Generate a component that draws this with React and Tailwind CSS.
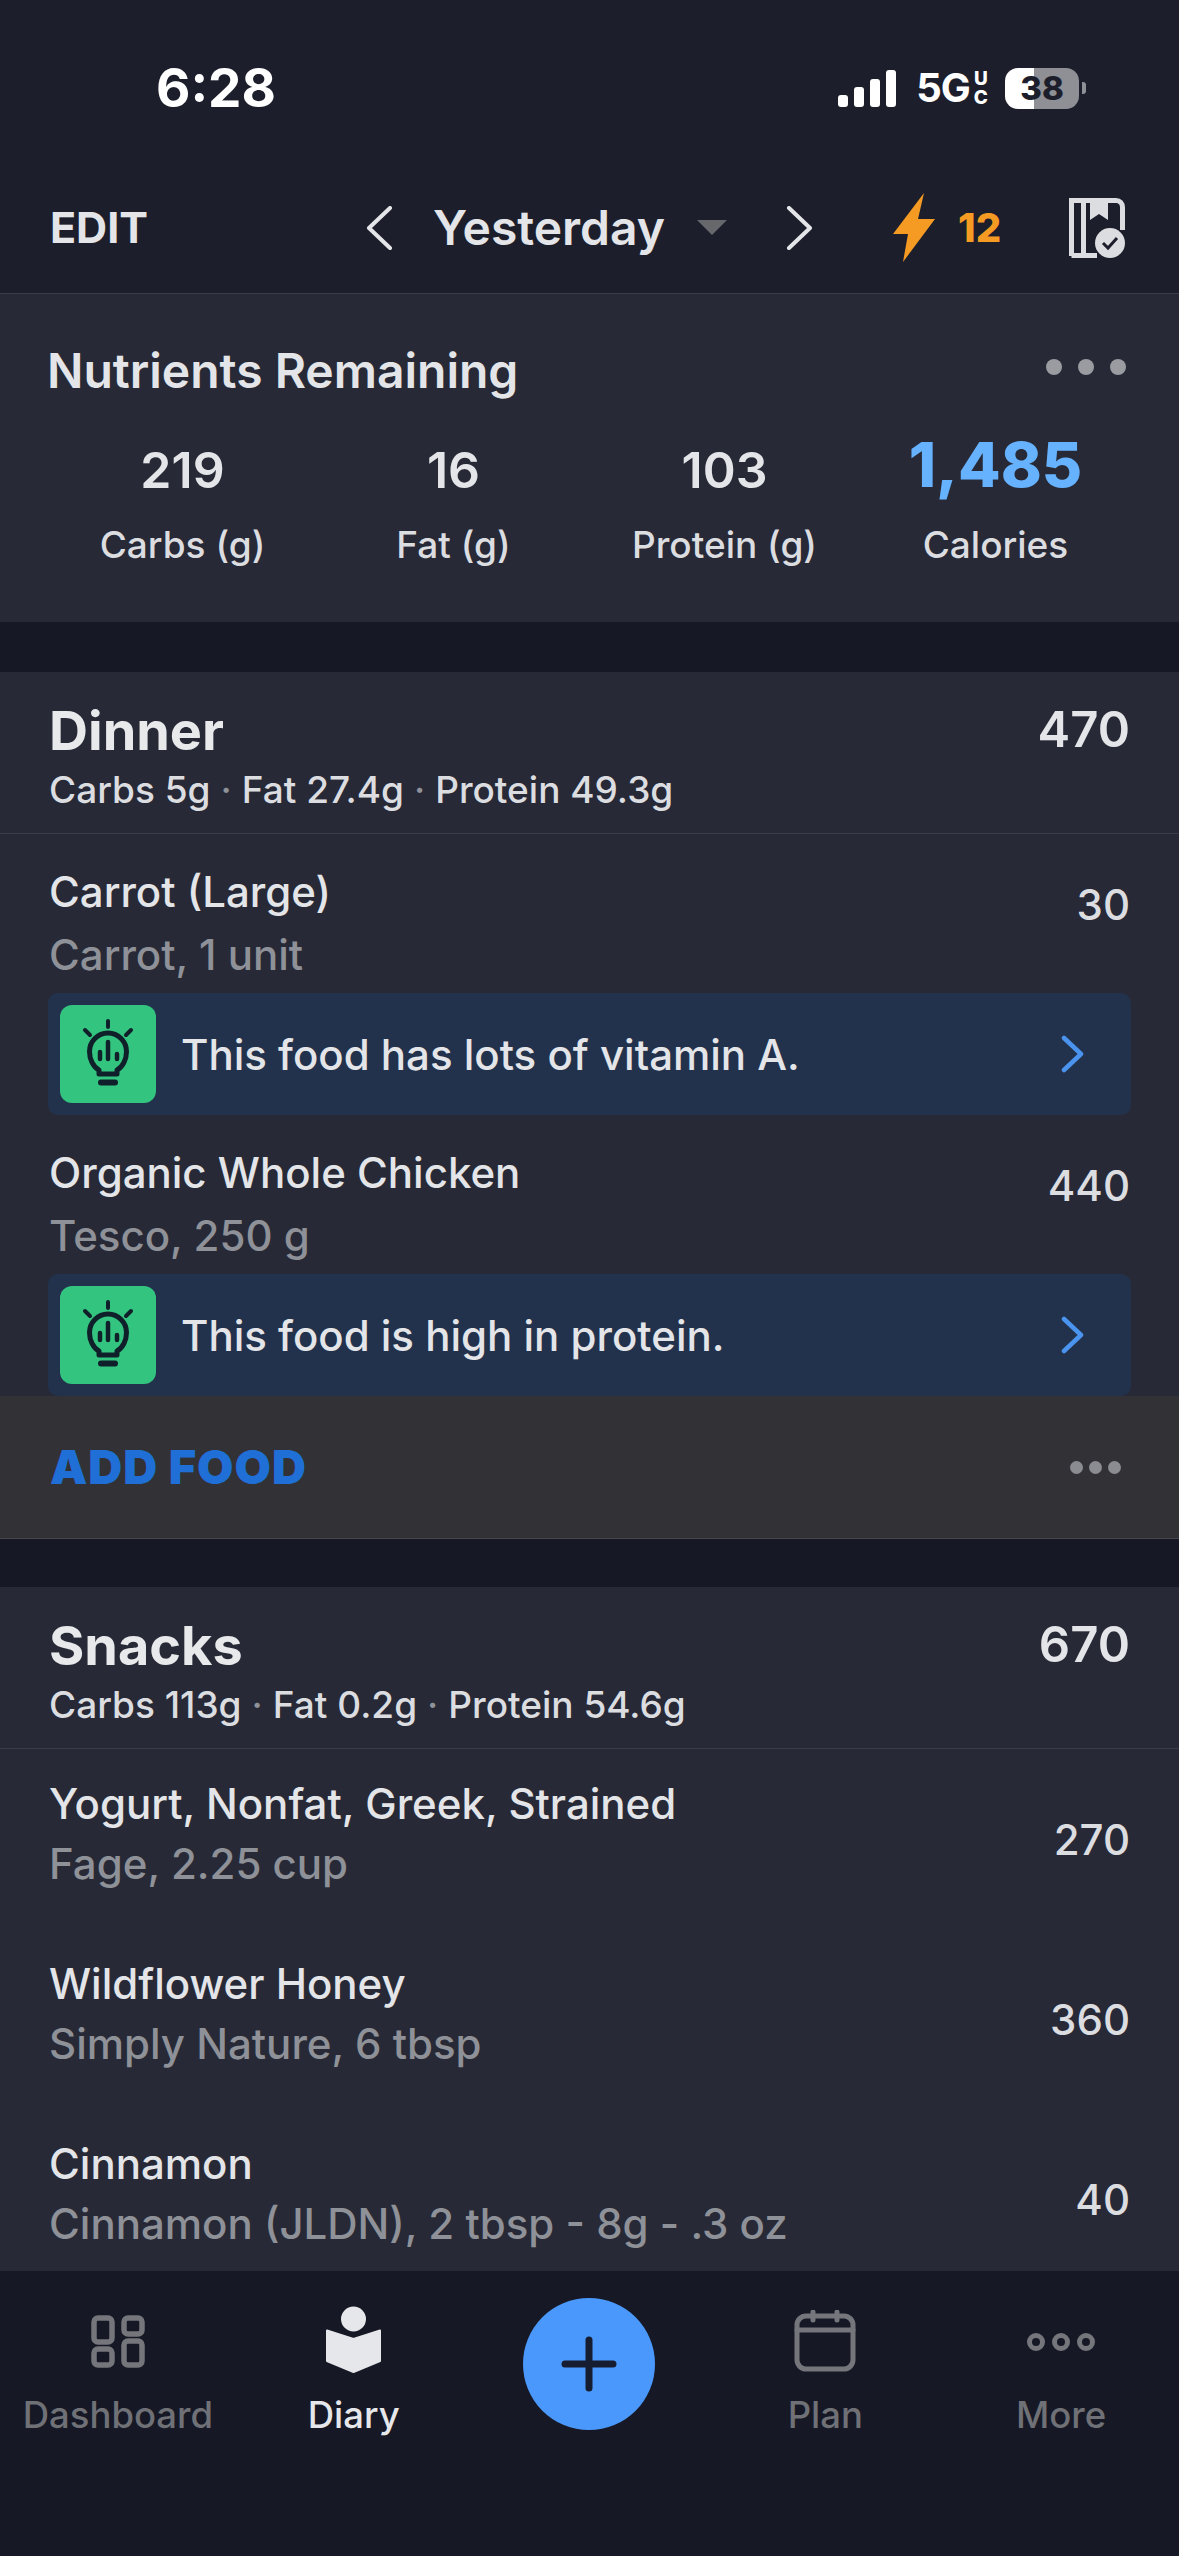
import React from "react";

const LightBulb = () => (
  <svg viewBox="0 0 96 98" className="w-[96px] h-[98px]" fill="none" stroke="#10202a" strokeWidth="5" strokeLinecap="round" strokeLinejoin="round">
    <path d="M48 16v6M25 25l5 5M71 25l-5 5" strokeWidth="4" />
    <path d="M39 69v-4c-6-3-9.500-11-9.500-18.500a18.500 18.500 0 0 1 37 0c0 7.500-3.500 15.500-9.500 18.500v4z" />
    <path d="M41 77.500h14" strokeWidth="6" />
    <path d="M40 47v7M48 37v17M57 49v5" strokeWidth="4.500" />
  </svg>
);

const Chevron = ({ dir }) => (
  <svg viewBox="0 0 27 44" className="w-[27px] h-[44px] shrink-0" fill="none" stroke="#e4e5e8" strokeWidth="4" strokeLinecap="round" strokeLinejoin="round">
    <path d={dir === "left" ? "M24 2 3 22l21 20" : "M3 2l21 20L3 42"} />
  </svg>
);

const Tip = ({ text }) => (
  <div className="ml-[48px] mr-[48px] h-[122px] rounded-[10px] bg-[#22324c] flex items-center pl-[12px] pr-[46px]">
    <div className="w-[96px] h-[98px] rounded-[12px] bg-[#33c47f] shrink-0">
      <LightBulb />
    </div>
    <span className="ml-[25px] flex-1 text-[42px] font-medium text-[#e4e5e8]">{text}</span>
    <svg viewBox="0 0 24 38" className="w-[24px] h-[38px]" fill="none" stroke="#4a94f0" strokeWidth="4.500" strokeLinecap="round" strokeLinejoin="round">
      <path d="M3 3l17 16L3 35" />
    </svg>
  </div>
);

const MealHeader = ({ name, calories, macros }) => (
  <div className="h-[162px] border-b border-[#3a3d48] px-[49px] pt-[22px]">
    <div className="flex justify-between items-center h-[72px]">
      <span className="text-[54px] font-bold text-[#e8e9eb]">{name}</span>
      <span className="text-[49px] font-semibold text-[#e4e5e8]">{calories}</span>
    </div>
    <div className="mt-[2px] text-[37px] font-medium text-[#dcdde0] leading-[44px]">
      {macros[0]}<span className="text-[#8f9299] mx-[10px]">·</span>{macros[1]}<span className="text-[#8f9299] mx-[10px]">·</span>{macros[2]}
    </div>
  </div>
);

const TipFoodRow = ({ title, sub, cal }) => (
  <div className="h-[159px] px-[49px] pt-[29px] flex justify-between">
    <div>
      <div className="text-[42px] font-medium leading-[58px] text-[#e4e5e8]">{title}</div>
      <div className="text-[42px] font-medium leading-[58px] mt-[5px] text-[#8f9198]">{sub}</div>
    </div>
    <div className="text-[42px] font-medium text-[#dcdde0] pt-[10px]">{cal}</div>
  </div>
);

const FoodRow = ({ title, sub, cal }) => (
  <div className="h-[180px] px-[49px] flex justify-between items-center">
    <div className="mb-[10px]">
      <div className="text-[42px] font-medium leading-[58px] text-[#e4e5e8]">{title}</div>
      <div className="text-[42px] font-medium leading-[58px] mt-[2px] text-[#8f9198]">{sub}</div>
    </div>
    <div className="text-[42px] font-medium text-[#dcdde0]">{cal}</div>
  </div>
);

const Nutrient = ({ value, label, blue }) => (
  <div className="flex flex-col items-center w-[271px]">
    <span className={blue ? "text-[62px] leading-[60px] mb-[10px] font-extrabold text-[#66b2ff]" : "text-[50px] leading-[70px] font-semibold text-[#e4e5e8]"}>{value}</span>
    <span className="text-[37px] leading-[50px] mt-[15px] font-medium text-[#dcdde0]">{label}</span>
  </div>
);

const DashboardIcon = () => (
  <svg viewBox="0 0 54 53" className="w-[54px] h-[53px] mt-[2px]" fill="none" stroke="#74767c" strokeWidth="5.500">
    <rect x="3" y="3" width="18" height="24" rx="4" />
    <rect x="33" y="3" width="18" height="16" rx="4" />
    <rect x="3" y="34" width="18" height="16" rx="4" />
    <rect x="33" y="26" width="18" height="24" rx="4" />
  </svg>
);

const DiaryIcon = () => (
  <svg viewBox="0 0 57 68" className="w-[57px] h-[68px]" fill="#e6e7ea" stroke="#e6e7ea" strokeWidth="2" strokeLinejoin="round">
    <circle cx="28.500" cy="13" r="11.500" />
    <path d="M2 24.500 28.500 33 55 24.500V55L28.500 66 2 55z" />
  </svg>
);

const PlanIcon = () => (
  <svg viewBox="0 0 62 62" className="w-[62px] h-[62px] mt-[2px]" fill="none" stroke="#74767c" strokeWidth="5" strokeLinecap="round">
    <rect x="3" y="6" width="56" height="53" rx="9" />
    <path d="M3 20h56M19 2v8M43 2v8" />
  </svg>
);

const MoreIcon = () => (
  <svg viewBox="0 0 68 18" className="w-[68px] h-[18px] mt-[4px]" fill="none" stroke="#74767c" strokeWidth="5">
    <circle cx="9" cy="9" r="6.500" />
    <circle cx="34" cy="9" r="6.500" />
    <circle cx="59" cy="9" r="6.500" />
  </svg>
);

const TabItem = ({ icon, label, active }) => (
  <div className="flex flex-col items-center">
    <div className="h-[98px] pb-[8px] flex items-center justify-center">{icon}</div>
    <span className={`text-[36.500px] leading-[44px] font-medium ${active ? "text-[#e6e7ea]" : "text-[#6f7177]"}`}>{label}</span>
  </div>
);

export default function App() {
  return (
    <div className="w-[1179px] h-[2556px] overflow-hidden flex flex-col bg-[#161925] font-['Inter',sans-serif]">
      {/* status bar */}
      <div className="h-[176px] shrink-0 bg-[#1c1f2b] flex items-center pl-[156px] pr-[93px] text-white">
        <span className="text-[53px] font-bold leading-none">6:28</span>
        <div className="flex-1" />
        <svg viewBox="0 0 58 37" className="w-[58px] h-[37px] ml-[1px]" fill="#fff">
          <rect x="0" y="25" width="10" height="12" rx="3" />
          <rect x="16" y="17" width="10" height="20" rx="3" />
          <rect x="32" y="9" width="10" height="28" rx="3" />
          <rect x="48" y="0" width="10" height="37" rx="3" />
        </svg>
        <span className="ml-[20px] text-[40px] font-bold leading-none tracking-[-1px]">5G</span>
        <div className="ml-[4px] flex flex-col text-[19px] font-extrabold leading-[19px] items-center">
          <span>U</span>
          <span>C</span>
        </div>
        <div className="ml-[17px] w-[74px] h-[41px] rounded-[13px] bg-[linear-gradient(90deg,#fff_39%,#8e9096_39%)] flex items-center justify-center text-[#1c1f2b] text-[33px] font-extrabold leading-none">38</div>
        <div className="ml-[3px] w-[4px] h-[12px] rounded-r-[3px] bg-[#8e9096]" />
      </div>

      {/* date header */}
      <div className="h-[118px] shrink-0 bg-[#1c1f2b] border-b border-[#3a3d48] flex items-center pl-[50px] pr-[54px] pb-[14px]">
        <span className="text-[43px] font-bold text-[#e4e5e8] w-[95px]">EDIT</span>
        <div className="ml-[221px]"><Chevron dir="left" /></div>
        <span className="ml-[40px] text-[48px] font-semibold text-[#e4e5e8] w-[230px] whitespace-nowrap">Yesterday</span>
        <div className="ml-[34px] w-0 h-0 border-l-[15px] border-r-[15px] border-t-[15px] border-l-transparent border-r-transparent border-t-[#66686c]" />
        <div className="ml-[59px]"><Chevron dir="right" /></div>
        <svg viewBox="0 0 42 69" className="ml-[80px] w-[42px] h-[69px] shrink-0" fill="#f59a23">
          <path d="M31 0 0 41h15L10 69 42 26H25z" />
        </svg>
        <span className="ml-[23px] text-[40px] font-extrabold text-[#f59a23]">12</span>
        <svg viewBox="0 0 56 60" className="ml-auto w-[56px] h-[60px] shrink-0">
          <path d="M2.500 58V2.500H47c4 0 6.500 3 6.500 7V32M2.500 57.500H28M14.500 2v56" fill="none" stroke="#dcdde0" strokeWidth="5" />
          <path d="M21 2h18v20l-9-6-9 6z" fill="#dcdde0" />
          <circle cx="41" cy="45" r="15" fill="#dcdde0" />
          <path d="M34 45l5 5 9-10" fill="none" stroke="#1c1f2b" strokeWidth="3" />
        </svg>
      </div>

      {/* scroll area */}
      <div className="flex-1 min-h-0 overflow-hidden flex flex-col">
        <div className="h-[328px] shrink-0 bg-[#272a36] px-[47px] pt-[45px]">
          <div className="flex justify-between items-center h-[64px]">
            <span className="text-[48px] font-semibold text-[#e4e5e8]">Nutrients Remaining</span>
            <div className="flex gap-[16px] pr-[6px] mb-[8px]">
              <span className="w-[16px] h-[16px] rounded-full bg-[#9a9ca2]" />
              <span className="w-[16px] h-[16px] rounded-full bg-[#9a9ca2]" />
              <span className="w-[16px] h-[16px] rounded-full bg-[#9a9ca2]" />
            </div>
          </div>
          <div className="flex mt-[32px]">
            <Nutrient value="219" label="Carbs (g)" />
            <Nutrient value="16" label="Fat (g)" />
            <Nutrient value="103" label="Protein (g)" />
            <Nutrient value="1,485" label="Calories" blue />
          </div>
        </div>

        <div className="h-[50px] shrink-0" />

        <div className="shrink-0 bg-[#272a36]">
          <MealHeader name="Dinner" calories="470" macros={["Carbs 5g", "Fat 27.4g", "Protein 49.3g"]} />
          <TipFoodRow title="Carrot (Large)" sub="Carrot, 1 unit" cal="30" />
          <Tip text="This food has lots of vitamin A." />
          <TipFoodRow title="Organic Whole Chicken" sub="Tesco, 250 g" cal="440" />
          <Tip text="This food is high in protein." />
        </div>
        <div className="h-[143px] shrink-0 bg-[#323236] border-b border-[#46474d] flex items-center justify-between pl-[50px] pr-[58px]">
          <span className="text-[47px] font-black text-[#1f6fd6] tracking-[1px]">ADD FOOD</span>
          <div className="flex gap-[6px]">
            <span className="w-[13px] h-[13px] rounded-full bg-[#8a8c92]" />
            <span className="w-[13px] h-[13px] rounded-full bg-[#8a8c92]" />
            <span className="w-[13px] h-[13px] rounded-full bg-[#8a8c92]" />
          </div>
        </div>

        <div className="h-[48px] shrink-0" />

        <div className="flex-1 bg-[#272a36]">
          <MealHeader name="Snacks" calories="670" macros={["Carbs 113g", "Fat 0.2g", "Protein 54.6g"]} />
          <FoodRow title="Yogurt, Nonfat, Greek, Strained" sub="Fage, 2.25 cup" cal="270" />
          <FoodRow title="Wildflower Honey" sub="Simply Nature, 6 tbsp" cal="360" />
          <FoodRow title="Cinnamon" sub="Cinnamon (JLDN), 2 tbsp - 8g - .3 oz" cal="40" />
        </div>
      </div>

      {/* tab bar */}
      <div className="h-[285px] shrink-0 bg-[#161925] grid grid-cols-5 pt-[24px]">
        <TabItem icon={<DashboardIcon />} label="Dashboard" />
        <TabItem icon={<DiaryIcon />} label="Diary" active />
        <div className="flex justify-center pt-[3px]">
          <div className="w-[132px] h-[132px] rounded-full bg-[#4a98fb] flex items-center justify-center">
            <svg viewBox="0 0 56 56" className="w-[56px] h-[56px]" stroke="#161d30" strokeWidth="7" strokeLinecap="round">
              <path d="M28 4v48M4 28h48" />
            </svg>
          </div>
        </div>
        <TabItem icon={<PlanIcon />} label="Plan" />
        <TabItem icon={<MoreIcon />} label="More" />
      </div>
    </div>
  );
}
